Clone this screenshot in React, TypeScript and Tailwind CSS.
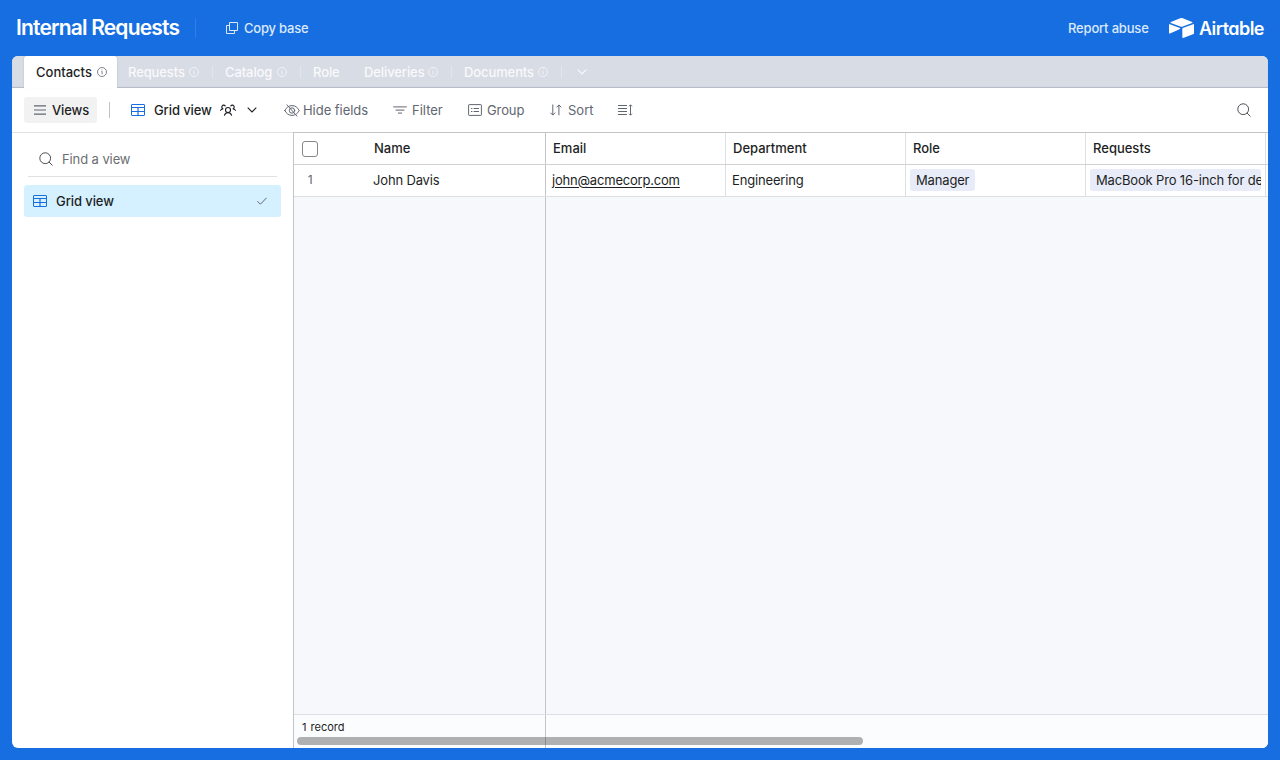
import { useState } from 'react';
import type { ReactNode } from 'react';

const TABS = [
  { name: 'Requests', info: true, width: 'w-[97px]' },
  { name: 'Catalog', info: true, width: 'w-[88px]' },
  { name: 'Role', info: false, width: 'w-[51px]' },
  { name: 'Deliveries', info: true, width: 'w-[100px]' },
  { name: 'Documents', info: true, width: 'w-[110px]' },
];

const COLUMNS = ['Email', 'Department', 'Role', 'Requests'];

function InfoIcon() {
  return (
    <svg width="10" height="10" viewBox="0 0 10 10" fill="none" stroke="currentColor" strokeWidth="0.8" className="shrink-0">
      <circle cx="5" cy="5" r="4.5" />
      <path d="M4.5 4.5H5.1V7.3M4.9 2.6V3.4" />
    </svg>
  );
}

function CopyIcon() {
  return (
    <svg width="12" height="12" viewBox="0 0 12 12" fill="none" stroke="currentColor" className="shrink-0">
      <path d="M3.5 0.5H11.5V8.5H3.5Z" />
      <path d="M3.5 3.5H0.5V11.5H8.5V8.5" />
    </svg>
  );
}

function GridIcon() {
  return (
    <svg width="14" height="12" viewBox="0 0 14 12" fill="none" stroke="#166ee1" className="shrink-0">
      <rect x="0.5" y="0.5" width="13" height="11" rx="0.5" />
      <path d="M0.5 3.5H13.5M0.5 7.5H13.5" />
      <path d="M7 3.5V11.5" strokeWidth="1.2" />
    </svg>
  );
}

function Chevron() {
  return (
    <svg width="10" height="6" viewBox="0 0 10 6" fill="none" stroke="currentColor" strokeWidth="1.1" className="shrink-0">
      <path d="M0.7 0.7L5 5L9.3 0.7" />
    </svg>
  );
}

function SearchIcon() {
  return (
    <svg width="14" height="14" viewBox="0 0 14 14" fill="none" stroke="currentColor" className="shrink-0">
      <circle cx="6.2" cy="6.2" r="5.4" />
      <path d="M10.2 10.2L13.2 13.2" strokeLinecap="round" />
    </svg>
  );
}

function PeopleIcon() {
  return (
    <svg width="16" height="12" viewBox="0 0 16 12" fill="none" stroke="currentColor" strokeWidth="1.1" strokeLinecap="round" className="shrink-0">
      <circle cx="8" cy="6" r="2.5" />
      <path d="M4.4 11.2C5.1 9.5 6.3 8.6 8 8.6C9.7 8.6 10.9 9.5 11.6 11.2" />
      <path d="M5.2 1.9A1.9 1.9 0 1 0 3.2 4.9C2.2 4.9 1.2 5.4 0.6 6.3" />
      <path d="M10.8 1.9A1.9 1.9 0 1 1 12.8 4.9C13.8 4.9 14.8 5.4 15.4 6.3" />
    </svg>
  );
}

function HiddenIcon() {
  return (
    <svg width="16" height="13" viewBox="0 0 16 13" fill="none" stroke="currentColor" strokeWidth="1" strokeLinecap="round" className="shrink-0">
      <path d="M0.8 6.5C2.3 3.4 4.8 1.6 8 1.6S13.7 3.4 15.2 6.5C13.7 9.6 11.2 11.4 8 11.4S2.3 9.6 0.8 6.5Z" />
      <circle cx="8" cy="6.5" r="2.7" />
      <path d="M3 0.8L13 12.2" />
    </svg>
  );
}

function FilterIcon() {
  return (
    <svg width="14" height="8" viewBox="0 0 14 8" fill="none" stroke="currentColor" className="shrink-0">
      <path d="M0.2 0.9H13.8M2.5 4.1H11.5M5 7.1H9" />
    </svg>
  );
}

function GroupIcon() {
  return (
    <svg width="14" height="12" viewBox="0 0 14 12" fill="none" stroke="currentColor" className="shrink-0">
      <rect x="0.6" y="0.6" width="12.8" height="10.8" rx="0.6" />
      <path d="M3 4.5H4.4M5.6 4.5H11M3 7.5H4.4M5.6 7.5H11" />
    </svg>
  );
}

function SortIcon() {
  return (
    <svg width="12" height="12" viewBox="0 0 12 12" fill="none" stroke="currentColor" className="shrink-0">
      <path d="M2.8 0.5V11M0.4 8.7L2.8 11.1L5.2 8.7" />
      <path d="M8.9 11.3V1M6.5 3.3L8.9 0.9L11.3 3.3" />
    </svg>
  );
}

function RowHeightIcon() {
  return (
    <svg width="15" height="12" viewBox="0 0 15 12" fill="none" stroke="currentColor" className="shrink-0">
      <path d="M0 1.5H9M0 4.5H9M0 7.5H9M0 10.5H9M12.5 1V11" />
      <path d="M11 2.3L12.5 0.8L14 2.3M11 9.7L12.5 11.2L14 9.7" />
    </svg>
  );
}

function AirtableLogo() {
  return (
    <svg width="25" height="20" viewBox="11 10 177 149" fill="white" preserveAspectRatio="none" className="shrink-0">
      <path d="M90 12.4L24.1 39.7C20.4 41.2 20.4 46.4 24.1 47.9L90.4 74.1C96.2 76.4 102.7 76.4 108.5 74.1L174.7 47.9C178.4 46.4 178.5 41.2 174.8 39.7L108.8 12.4C102.8 9.9 96.1 9.9 90 12.4" />
      <path d="M105.3 88.5V154.1C105.3 157.2 108.5 159.3 111.4 158.2L185.2 129.5C186.9 128.9 188 127.2 188 125.4V59.8C188 56.7 184.8 54.6 181.9 55.7L108.1 84.4C106.4 85 105.3 86.6 105.3 88.5" />
      <path d="M88.1 91.8L66.2 102.4L17.7 125.7C14.8 127.1 11 124.9 11 121.7V60.1C11 58.9 11.6 57.9 12.5 57.1C12.8 56.8 13.2 56.5 13.6 56.3C14.7 55.6 16.3 55.4 17.6 56L87.7 83.8C91.3 85.2 91.6 90.2 88.1 91.8" />
    </svg>
  );
}

function ToolButton({ icon, label, className }: { icon: ReactNode; label?: string; className: string }) {
  return (
    <button className={`flex h-[26px] shrink-0 items-center whitespace-nowrap text-[#616670] ${className}`}>
      {icon}
      {label && <span>{label}</span>}
    </button>
  );
}

function Header() {
  return (
    <header className="flex h-14 shrink-0 items-center pr-4 pl-4 text-white">
      <h1 className="w-[179px] whitespace-nowrap text-[21px] leading-7 font-semibold tracking-[-0.82px]">Internal Requests</h1>
      <div className="h-5 w-px bg-[#2f7fe8]" />
      <button className="ml-[30px] flex items-center gap-[6px] font-medium tracking-[-0.2px] text-[#dce9fb]">
        <CopyIcon />
        Copy base
      </button>
      <div className="ml-auto flex items-center">
        <button className="w-[101px] text-left font-medium tracking-[-0.18px] whitespace-nowrap text-[#dce9fb]">Report abuse</button>
        <AirtableLogo />
        <span className="mt-px ml-[5px] w-[65px] text-[18px] font-semibold tracking-[-0.55px] [font-feature-settings:'cv11']">Airtable</span>
      </div>
    </header>
  );
}

function TabStrip() {
  return (
    <nav className="flex h-8 shrink-0 bg-[#d8dce5] pl-3 font-medium shadow-[inset_0_-1px_1px_#b5b9c6]">
      <div className="flex w-[93px] items-center justify-between rounded-t-[3px] bg-white pr-[10px] pl-3 text-[#1d1f25] shadow-[0_-1px_2px_rgba(0,0,0,0.15)]">
        <span>Contacts</span>
        <span className="text-[#616670]"><InfoIcon /></span>
      </div>
      <div className="-ml-px flex">
        {TABS.map((tab) => (
          <div key={tab.name} className={`flex shrink-0 items-center ${tab.width}`}>
            <div className="flex flex-1 items-center justify-between pr-[13px] pl-3 text-[#f8f9fb]">
              <span className="tracking-[-0.1px]">{tab.name}</span>
              {tab.info && <InfoIcon />}
            </div>
            <div className="h-3 w-px bg-[#e3e6ec]" />
          </div>
        ))}
      </div>
      <button className="ml-[15px] text-[#f8f9fb]">
        <Chevron />
      </button>
    </nav>
  );
}

function Toolbar() {
  return (
    <div className="flex h-11 shrink-0 items-center pl-3">
      <button className="flex h-[26px] w-[73px] items-center gap-[6px] rounded-[3px] bg-[#f2f2f2] pl-[10px] font-medium tracking-[-0.1px] text-[#1d1f25]">
        <svg width="12" height="10" viewBox="0 0 12 10" fill="none" stroke="#616670" strokeWidth="1.2">
          <path d="M0 0.8H12M0 5H12M0 9.2H12" />
        </svg>
        Views
      </button>
      <div className="ml-3 h-4 w-px bg-[#bfc1c5]" />
      <button className="ml-[21px] flex w-[127px] items-center font-medium tracking-[-0.1px] text-[#1d1f25]">
        <GridIcon />
        <span className="ml-[9px] w-[66px] text-left whitespace-nowrap">Grid view</span>
        <PeopleIcon />
        <span className="ml-[11px]"><Chevron /></span>
      </button>
      <ToolButton icon={<HiddenIcon />} label="Hide fields" className="ml-[26px] w-[109px] gap-[3px] tracking-[-0.04px]" />
      <ToolButton icon={<FilterIcon />} label="Filter" className="w-[75px] gap-[5px]" />
      <ToolButton icon={<GroupIcon />} label="Group" className="w-[82px] gap-[5px] tracking-[-0.1px]" />
      <ToolButton icon={<SortIcon />} label="Sort" className="w-[68px] gap-[6px]" />
      <ToolButton icon={<RowHeightIcon />} className="w-[15px]" />
      <button className="mr-[17px] ml-auto text-[#4c4f55]">
        <SearchIcon />
      </button>
    </div>
  );
}

function Sidebar() {
  return (
    <aside className="flex w-[281px] shrink-0 flex-col border-t border-[#e0e1e3] pr-3 pl-3">
      <div className="mr-1 ml-1 flex h-11 items-center border-b border-[#e0e1e3] pt-[9px] pl-[11px] text-[#4c4f55]">
        <SearchIcon />
        <input placeholder="Find a view" className="ml-[9px] w-[150px] bg-transparent tracking-[-0.1px] outline-none placeholder:text-[#6c6e73]" />
      </div>
      <button className="mt-2 flex h-8 items-center rounded-[3px] bg-[#d5f1ff] pr-[14px] pl-[9px] font-medium tracking-[-0.08px] text-[#1d1f25]">
        <GridIcon />
        <span className="ml-[9px]">Grid view</span>
        <svg width="10" height="8" viewBox="0 0 10 8" fill="none" stroke="#616670" className="ml-auto">
          <path d="M0.4 4.2L3.4 7.2L9.7 0.7" />
        </svg>
      </button>
    </aside>
  );
}

function Chip({ children }: { children: ReactNode }) {
  return <span className="h-[22px] overflow-hidden rounded-[3px] bg-[#e8ecf8] px-[6px] leading-[22px] whitespace-nowrap">{children}</span>;
}

function Grid() {
  const [checked, setChecked] = useState(false);
  const cell = 'flex w-[180px] shrink-0 items-center border-r border-[#dedfe3] pb-px';

  return (
    <main className="flex min-w-0 flex-1 flex-col overflow-hidden border-t border-l border-[#c2c4c8] bg-[#f6f8fc] text-[#1d1f25]">
      <div className="flex h-8 shrink-0 border-b border-[#d1d2d5] bg-white font-medium">
        <div className="flex w-[252px] shrink-0 items-center border-r border-[#c2c4c8] pl-2">
          <input
            type="checkbox"
            checked={checked}
            onChange={() => setChecked(!checked)}
            className="size-4 appearance-none rounded-[3px] border border-[#85878b] bg-white checked:bg-[#166ee1]"
          />
          <span className="ml-14 pb-px">Name</span>
        </div>
        {COLUMNS.map((name) => (
          <div key={name} className={`${cell} pl-[7px]`}>{name}</div>
        ))}
      </div>
      <div className="flex h-8 shrink-0 border-b border-[#dedfe3] bg-white tracking-[-0.16px]">
        <div className="flex w-[252px] shrink-0 items-center border-r border-[#c2c4c8] pb-px">
          <span className="w-8 text-center text-xs text-[#616670]">1</span>
          <span className="ml-[47px]">John Davis</span>
        </div>
        <div className={`${cell} pl-[6px]`}>
          <a className="tracking-[-0.2px] underline underline-offset-2">john@acmecorp.com</a>
        </div>
        <div className={`${cell} pl-[6px]`}>Engineering</div>
        <div className={`${cell} px-1`}><Chip>Manager</Chip></div>
        <div className={`${cell} px-1`}><Chip>MacBook Pro 16-inch for de</Chip></div>
      </div>
      <div className="w-[252px] flex-1 border-r border-[#c2c4c8]" />
      <footer className="relative h-[34px] shrink-0 border-t border-[#dedfe3] bg-[#fbfcfe]">
        <div className="h-full w-[252px] border-r border-[#c2c4c8] pt-[5px] pl-2 text-[11px] leading-[15px] [word-spacing:1px]">1 record</div>
        <div className="absolute bottom-[3px] left-[3px] h-2 w-[566px] rounded-full bg-black/30" />
      </footer>
    </main>
  );
}

export default function App() {
  return (
    <div className="flex h-[760px] w-[1280px] flex-col overflow-hidden bg-[#166ee1] font-['Inter',sans-serif] text-[13px] leading-[18px]">
      <Header />
      <div className="mx-3 mb-3 flex min-h-0 flex-1 flex-col overflow-hidden rounded-md bg-white">
        <TabStrip />
        <Toolbar />
        <div className="flex min-h-0 flex-1">
          <Sidebar />
          <Grid />
        </div>
      </div>
    </div>
  );
}
